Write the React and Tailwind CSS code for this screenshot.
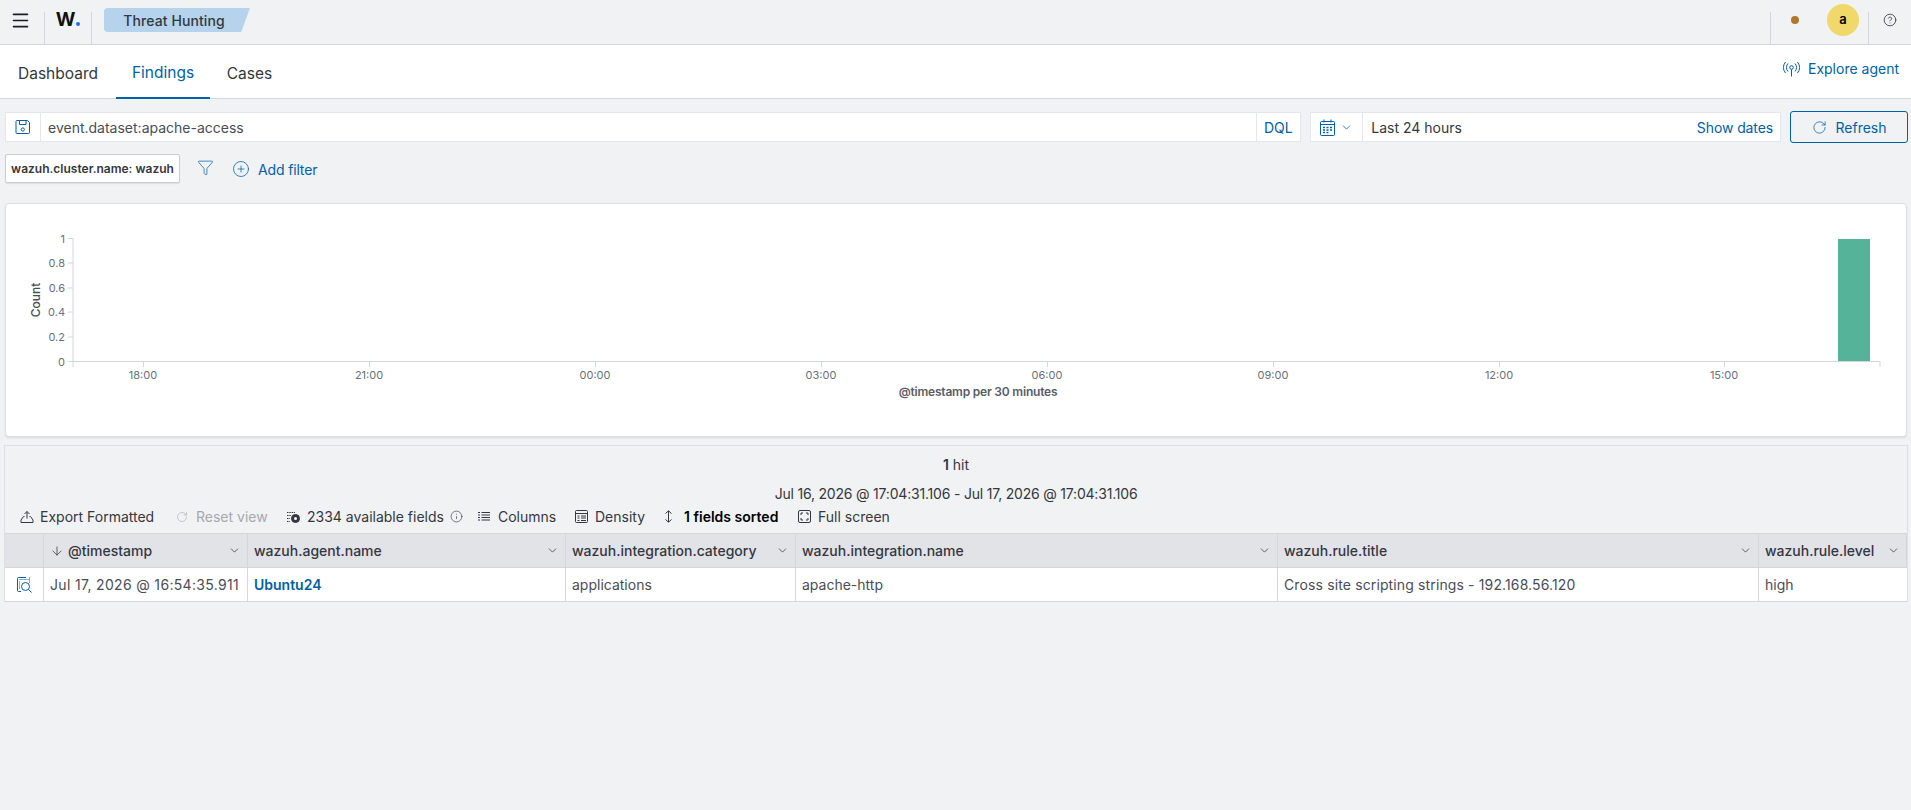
import { Menu, Filter, CirclePlus, ChevronDown, RotateCw, CircleHelp, Info, ArrowDown } from 'lucide-react';

const tabs = [
    { label: 'Dashboard', width: 'w-[116px]', active: false },
    { label: 'Findings', width: 'w-[94px]', active: true },
    { label: 'Cases', width: 'w-[79px]', active: false },
];

const columns = [
    { label: '@timestamp', sorted: true },
    { label: 'wazuh.agent.name' },
    { label: 'wazuh.integration.category' },
    { label: 'wazuh.integration.name' },
    { label: 'wazuh.rule.title' },
    { label: 'wazuh.rule.level' },
];

const row = [
    { text: 'Jul 17, 2026 @ 16:54:35.911', className: 'text-[#4a4d57] tracking-[0.33px]' },
    { text: 'Ubuntu24', className: 'font-semibold text-[#0061a6]' },
    { text: 'applications', className: 'text-[#4a4d57]' },
    { text: 'apache-http', className: 'text-[#4a4d57]' },
    { text: 'Cross site scripting strings - 192.168.56.120', className: 'text-[#4a4d57] tracking-[0.13px]' },
    { text: 'high', className: 'text-[#4a4d57]' },
];

const yTicks = [
    { label: '1', y: 238.5 },
    { label: '0.8', y: 263 },
    { label: '0.6', y: 288 },
    { label: '0.4', y: 312 },
    { label: '0.2', y: 337 },
    { label: '0', y: 361.5 },
];

const xTicks = [
    { label: '18:00', x: 143 },
    { label: '21:00', x: 369 },
    { label: '00:00', x: 595 },
    { label: '03:00', x: 821 },
    { label: '06:00', x: 1047 },
    { label: '09:00', x: 1273 },
    { label: '12:00', x: 1499 },
    { label: '15:00', x: 1724 },
];

function InspectIcon() {
    return (
        <svg width="16" height="18" viewBox="0 0 16 18" fill="none" stroke="#0061a6" strokeWidth="1">
            <path d="M10 1.5H2.5a1 1 0 0 0-1 1v12a1 1 0 0 0 1 1H5" />
            <path d="M3.5 3.5h10M13.5 1.5v5" strokeDasharray="1 1" />
            <path d="M3.5 5.5v8" strokeDasharray="1 1" />
            <circle cx="9.5" cy="10.5" r="4" />
            <path d="M12.5 13.5l3 3" />
        </svg>
    );
}

function SaveIcon() {
    return (
        <svg width="16" height="16" viewBox="0 0 16 16" fill="none" stroke="#0061a6" strokeWidth="1">
            <path d="M2 1.5h10.5l2 2v10a1 1 0 0 1-1 1H2a1 1 0 0 1-1-1v-11a1 1 0 0 1 1-1z" />
            <path d="M4.5 1.5v4h6.5v-4" />
            <circle cx="7.8" cy="10.5" r="1.6" />
        </svg>
    );
}

function CalendarIcon() {
    return (
        <svg width="15" height="17" viewBox="0 0 15 17" fill="none" stroke="#0061a6" strokeWidth="1">
            <rect x="0.5" y="2.5" width="14" height="14" rx="1" />
            <path d="M0.5 5.5h14M4 0.5v3M11 0.5v3" />
            <path d="M3 8.5h9M3 11h9M3 13.5h6" strokeWidth="1.5" strokeDasharray="2 1.5" />
        </svg>
    );
}

function AntennaIcon() {
    return (
        <svg width="17" height="16" viewBox="0 0 17 16" fill="none" stroke="#0061a6" strokeWidth="1">
            <circle cx="8.5" cy="6.5" r="1.8" />
            <path d="M8.5 8.5V15.5" />
            <path d="M5 2.5a6 6 0 0 0 0 8M12 2.5a6 6 0 0 1 0 8" />
            <path d="M2.5 1a9 9 0 0 0 0 11M14.5 1a9 9 0 0 1 0 11" />
        </svg>
    );
}

function ExportIcon() {
    return (
        <svg width="14" height="14" viewBox="0 0 14 14" fill="none" stroke="#343741" strokeWidth="1">
            <path d="M4.5 4L7 1.5 9.5 4M7 1.5v7" />
            <path d="M4.5 6.5h-1L1 10v2.5h12V10l-2.5-3.5h-1" />
        </svg>
    );
}

function FieldsIcon() {
    return (
        <svg width="13" height="13" viewBox="0 0 13 13" fill="none" stroke="#343741" strokeWidth="1">
            <path d="M0 2.5h8M0 5.5h4M0 8.5h3M0 11.5h3" strokeDasharray="1.5 0.8" />
            <circle cx="8.5" cy="8.5" r="4" fill="#343741" />
            <circle cx="8.5" cy="8.5" r="1.5" fill="#fff" stroke="none" />
        </svg>
    );
}

function ColumnsIcon() {
    return (
        <svg width="12" height="11" viewBox="0 0 12 11" fill="none" stroke="#343741" strokeWidth="1">
            <path d="M0 1.5h2M3.5 1.5H12M0 4h2M3.5 4H12M0 6.5h2M3.5 6.5H12M0 9h2M3.5 9H12" />
        </svg>
    );
}

function DensityIcon() {
    return (
        <svg width="13" height="13" viewBox="0 0 13 13" fill="none" stroke="#343741" strokeWidth="1">
            <rect x="0.5" y="0.5" width="12" height="12" rx="1" />
            <path d="M0.5 3.5h12M2.5 6h2M6 6h5M2.5 8h2M6 8h5M2.5 10.5h2M6 10.5h5" />
        </svg>
    );
}

function SortIcon() {
    return (
        <svg width="9" height="13" viewBox="0 0 9 13" fill="none" stroke="#343741" strokeWidth="1">
            <path d="M1.5 3.5L4.5 0.8l3 2.7M1.5 9.5l3 2.7 3-2.7M4.5 1v11" />
        </svg>
    );
}

function FullScreenIcon() {
    return (
        <svg width="13" height="13" viewBox="0 0 13 13" fill="none" stroke="#343741" strokeWidth="1">
            <rect x="0.5" y="0.5" width="12" height="12" rx="1.5" />
            <path d="M3 5V3h2M8 3h2v2M10 8v2H8M5 10H3V8" />
        </svg>
    );
}

function ToolbarItem({ icon, label, className = '', textClass = 'text-[#343741]' }) {
    return (
        <div className={`flex shrink-0 items-center ${className}`}>
            <span className="flex w-[20px] items-center">{icon}</span>
            <span className={textClass}>{label}</span>
        </div>
    );
}

export default function App() {
    return (
        <div className="min-h-[810px] w-[1911px] overflow-hidden bg-[#f1f2f4] font-['Inter',sans-serif] text-[14px] text-[#343741]">
            <header className="flex h-[45px] items-start border-b border-[#d3d6dc]">
                <div className="flex h-[44px] w-[44px] items-center justify-center pr-[4px] pb-[4px]">
                    <Menu size={21} strokeWidth={1.8} color="#1a1c21" />
                </div>
                <div className="mt-[12px] flex h-[32px] w-[48px] items-start justify-center border-x border-[#d3d6dc]">
                    <span className="-mt-[2px] text-[19px] leading-[19px] font-bold tracking-[-1px] text-[#111]">W</span>
                    <span className="mt-[10px] ml-[2px] h-[4px] w-[4px] rounded-full bg-[#1a73e8]" />
                </div>
                <div className="mt-[8px] ml-[12px] flex h-[24px] w-[146px] items-center justify-center rounded-l-[4px] bg-[#b5d3ec] pr-[6px] text-[14px] font-medium tracking-[0.1px] [clip-path:polygon(0_0,100%_0,94%_100%,0_100%)]">
                    Threat Hunting
                </div>
                <div className="mt-[12px] ml-auto flex h-[32px] items-start">
                    <div className="flex h-[32px] w-[48px] justify-center border-l border-[#d3d6dc] pt-[4px]">
                        <span className="h-[8px] w-[8px] rounded-full bg-[#ad7a2c]" />
                    </div>
                    <div className="-mt-[8px] flex h-[40px] w-[50px] justify-center">
                        <span className="flex h-[32px] w-[32px] items-center justify-center rounded-full bg-[#f0d86b] text-[13px] font-semibold text-black">a</span>
                    </div>
                    <div className="flex h-[32px] w-[43px] justify-center border-l border-[#d3d6dc] pt-[1px]">
                        <CircleHelp size={14} strokeWidth={1.4} />
                    </div>
                </div>
            </header>

            <nav className="flex h-[54px] items-stretch border-b border-[#d3d6dc] bg-white pr-[12px]">
                <div className="flex">
                    {tabs.map(tab => (
                        <div
                            key={tab.label}
                            className={`flex h-[54px] ${tab.width} items-center justify-center pt-[3px] text-[15.5px] ${tab.active ? 'border-b-2 border-[#0061a6] text-[#0061a6]' : ''}`}
                        >
                            {tab.label}
                        </div>
                    ))}
                </div>
                <div className="ml-auto flex items-center gap-[8px] pb-[6px] text-[#0061a6]">
                    <AntennaIcon />
                    <span>Explore agent</span>
                </div>
            </nav>

            <div className="flex items-start gap-[9px] pt-[12px] pr-[3px] pl-[5px]">
                <div className="mt-[1px] flex h-[30px] w-[1297px] items-center border border-[#e3e6ec] bg-white">
                    <div className="flex h-full w-[35px] items-center justify-center border-r border-[#e3e6ec]">
                        <SaveIcon />
                    </div>
                    <span className="ml-[7px] text-[#4a4d57]">event.dataset:apache-access</span>
                    <span className="ml-auto flex h-full w-[44px] items-center justify-center border-l border-[#e3e6ec] pr-[1px] text-[#0061a6]">DQL</span>
                </div>
                <div className="mt-[1px] flex h-[30px] w-[471px] items-center border border-[#e3e6ec] bg-white">
                    <div className="flex h-full w-[52px] items-center justify-center gap-[5px] border-r border-[#e3e6ec] text-[#0061a6]">
                        <CalendarIcon />
                        <ChevronDown size={13} strokeWidth={1.4} />
                    </div>
                    <span className="ml-[8px]">Last 24 hours</span>
                    <span className="mr-[7px] ml-auto tracking-[-0.1px] text-[#0061a6]">Show dates</span>
                </div>
                <div className="flex h-[32px] w-[118px] items-center justify-center gap-[9px] rounded-[3px] border border-[#0061a6] text-[#0061a6]">
                    <RotateCw size={15} strokeWidth={1.2} />
                    <span>Refresh</span>
                </div>
            </div>

            <div className="mt-[11px] flex h-[29px] items-center pl-[5px]">
                <div className="flex h-[29px] w-[175px] items-center justify-center rounded-[2px] border border-[#c9cdd4] bg-white text-[12px] font-semibold shadow-[0_1px_1px_rgba(0,0,0,0.08)]">
                    wazuh.cluster.name: wazuh
                </div>
                <Filter size={17} strokeWidth={1} color="#0061a6" className="mt-[-3px] ml-[17px]" />
                <CirclePlus size={18} strokeWidth={1} color="#0061a6" className="mt-[1px] ml-[18px]" />
                <span className="mt-[2px] ml-[8px] tracking-[-0.15px] text-[#0061a6]">Add filter</span>
            </div>

            <section className="mt-[20px] ml-[5px] h-[234px] w-[1902px] rounded-[4px] border border-[#dcdfe5] bg-white shadow-[0_1px_2px_rgba(0,0,0,0.1)]">
                <svg width="1900" height="232" viewBox="6 204 1900 232" className="block font-['Inter',sans-serif]">
                    <path d="M73 238.5V367M73 361.5H1880M1880 361.5V367" fill="none" stroke="#d3d6dc" />
                    {yTicks.map(t => (
                        <g key={t.label}>
                            <path d={`M68 ${t.y}H73`} stroke="#d3d6dc" />
                            <text x="65" y={t.y + 4} textAnchor="end" fontSize="11" fill="#69707d">{t.label}</text>
                        </g>
                    ))}
                    {xTicks.map(t => (
                        <g key={t.label}>
                            <path d={`M${t.x + 0.5} 361.5V367`} stroke="#d3d6dc" />
                            <text x={t.x} y="379" textAnchor="middle" fontSize="11" fill="#69707d">{t.label}</text>
                        </g>
                    ))}
                    <rect x="1838" y="239" width="32" height="122" fill="#54b399" />
                    <text x="40" y="300" textAnchor="middle" fontSize="12" fontWeight="500" fill="#4a4d57" transform="rotate(-90 40 300)">Count</text>
                    <text x="978" y="396" textAnchor="middle" fontSize="12" fontWeight="600" letterSpacing="-0.2" fill="#5a5d67">@timestamp per 30 minutes</text>
                </svg>
            </section>

            <section className="mt-[8px] ml-[4px] w-[1904px] border border-b-0 border-[#dcdfe5]">
                <div className="pt-[9px] text-center leading-[20px]"><b className="font-semibold">1</b> hit</div>
                <div className="pt-[9px] text-center leading-[20px] tracking-[-0.2px]">Jul 16, 2026 @ 17:04:31.106 - Jul 17, 2026 @ 17:04:31.106</div>
                <div className="flex h-[29px] items-start pt-[2px] pl-[15px]">
                    <ToolbarItem icon={<ExportIcon />} label="Export Formatted" className="w-[156px]" />
                    <ToolbarItem icon={<RotateCw size={12} strokeWidth={1.2} color="#a5a9b1" />} label="Reset view" className="w-[111px]" textClass="text-[#a5a9b1]" />
                    <ToolbarItem icon={<FieldsIcon />} label={<span className="flex items-center gap-[6px]">2334 available fields <Info size={13} strokeWidth={1.2} /></span>} className="w-[191px]" />
                    <ToolbarItem icon={<ColumnsIcon />} label="Columns" className="w-[97px]" />
                    <ToolbarItem icon={<DensityIcon />} label="Density" className="w-[89px]" />
                    <ToolbarItem icon={<SortIcon />} label="1 fields sorted" className="w-[134px]" textClass="font-semibold text-black" />
                    <ToolbarItem icon={<FullScreenIcon />} label="Full screen" />
                </div>

                <div className="grid grid-cols-[39px_204px_318px_230px_482px_481px_minmax(0,1fr)] border-t border-[#d3d6dc]">
                    <div className="h-[34px] border-r border-b border-[#d3d6dc] bg-[#e2e3e7]" />
                    {columns.map(col => (
                        <div key={col.label} className="flex h-[34px] items-center justify-between border-r border-b border-[#d3d6dc] bg-[#e2e3e7] pr-[6px] pl-[6px] font-medium last:border-r-0">
                            <span className="flex items-center gap-[4px]">
                                {col.sorted && <ArrowDown size={14} strokeWidth={1.3} />}
                                {col.label}
                            </span>
                            <ChevronDown size={13} strokeWidth={1.4} />
                        </div>
                    ))}
                    <div className="flex h-[34px] items-center justify-center border-r border-b border-[#d3d6dc] bg-white">
                        <InspectIcon />
                    </div>
                    {row.map(cell => (
                        <div
                            key={cell.text}
                            className={`flex h-[34px] items-center border-r border-b border-[#d3d6dc] bg-white pl-[6px] last:border-r-0 ${cell.className}`}
                        >
                            {cell.text}
                        </div>
                    ))}
                </div>
            </section>
        </div>
    );
}
